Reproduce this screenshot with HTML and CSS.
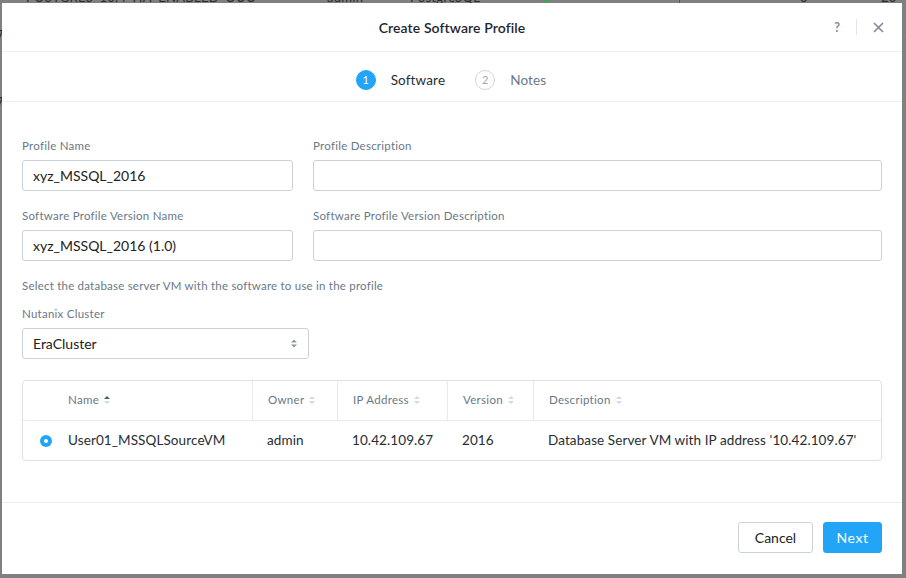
FILE: index.html
```html
<!DOCTYPE html>
<html lang="en">
<head>
<meta charset="utf-8">
<title>Create Software Profile</title>
<link rel="stylesheet" href="styles.css">
</head>
<body>
<div class="backdrop">
  <div class="bg-row bg-first">
    <span class="bg-name">POSTGRES_10.4_HA_ENABLED_OUO</span>
    <span class="bg-owner">admin</span>
    <span class="bg-type">PostgreSQL</span>
    <span class="bg-status"><span class="dot"></span></span>
    <span class="bg-line"></span>
    <span class="bg-count">0</span>
    <span class="bg-date">20</span>
  </div>
  <div class="bg-row bg-edge">
    <span class="bg-left">7</span>
    <span class="bg-right">2</span>
  </div>
  <div class="bg-row bg-edge bg-edge2">
    <span class="bg-left">7</span>
    <span class="bg-right">2</span>
  </div>
</div>

<div class="modal">
  <header class="modal-header">
    <span></span>
    <h1 class="modal-title">Create Software Profile</h1>
    <div class="header-actions">
      <span class="help">?</span>
      <span class="sep"></span>
      <svg class="close" width="11" height="11" viewBox="0 0 11 11"><path d="M1 1 L10 10 M10 1 L1 10" stroke="#7d8a99" stroke-width="1.6" fill="none"/></svg>
    </div>
  </header>

  <nav class="stepper">
    <div class="step active"><span class="step-num">1</span><span class="step-label">Software</span></div>
    <div class="step"><span class="step-num">2</span><span class="step-label">Notes</span></div>
  </nav>

  <main class="modal-body">
    <div class="form-grid">
      <div class="field">
        <label class="label">Profile Name</label>
        <div class="input">xyz_MSSQL_2016</div>
      </div>
      <div class="field">
        <label class="label">Profile Description</label>
        <div class="input"></div>
      </div>
      <div class="field">
        <label class="label">Software Profile Version Name</label>
        <div class="input">xyz_MSSQL_2016 (1.0)</div>
      </div>
      <div class="field">
        <label class="label">Software Profile Version Description</label>
        <div class="input"></div>
      </div>
    </div>

    <p class="hint">Select the database server VM with the software to use in the profile</p>

    <div class="field">
      <label class="label">Nutanix Cluster</label>
      <div class="select">
        <span>EraCluster</span>
        <svg width="6" height="9" viewBox="0 0 6 9"><path d="M0 3.5 L3 0.5 L6 3.5 Z M0 5.5 L3 8.5 L6 5.5 Z" fill="#8c96a1"/></svg>
      </div>
    </div>

    <div class="table">
      <div class="thead">
        <div class="cell c-radio"></div>
        <div class="cell c-name">Name <svg class="sort" width="6" height="10" viewBox="0 0 6 10"><path d="M0 4 L3 1 L6 4 Z" fill="#4f5b69"/><path d="M0 6 L3 9 L6 6 Z" fill="#d3d8de"/></svg></div>
        <div class="cell c-owner">Owner <svg class="sort" width="6" height="10" viewBox="0 0 6 10"><path d="M0 4 L3 1 L6 4 Z M0 6 L3 9 L6 6 Z" fill="#d3d8de"/></svg></div>
        <div class="cell c-ip">IP Address <svg class="sort" width="6" height="10" viewBox="0 0 6 10"><path d="M0 4 L3 1 L6 4 Z M0 6 L3 9 L6 6 Z" fill="#d3d8de"/></svg></div>
        <div class="cell c-ver">Version <svg class="sort" width="6" height="10" viewBox="0 0 6 10"><path d="M0 4 L3 1 L6 4 Z M0 6 L3 9 L6 6 Z" fill="#d3d8de"/></svg></div>
        <div class="cell c-desc">Description <svg class="sort" width="6" height="10" viewBox="0 0 6 10"><path d="M0 4 L3 1 L6 4 Z M0 6 L3 9 L6 6 Z" fill="#d3d8de"/></svg></div>
      </div>
      <div class="trow">
        <div class="cell c-radio"><span class="radio"></span></div>
        <div class="cell c-name">User01_MSSQLSourceVM</div>
        <div class="cell c-owner">admin</div>
        <div class="cell c-ip">10.42.109.67</div>
        <div class="cell c-ver">2016</div>
        <div class="cell c-desc">Database Server VM with IP address '10.42.109.67'</div>
      </div>
    </div>
  </main>

  <footer class="modal-footer">
    <button class="btn btn-secondary">Cancel</button>
    <button class="btn btn-primary">Next</button>
  </footer>
</div>
</body>
</html>
```

FILE: styles.css
```css
* { box-sizing: border-box; }

html, body {
  margin: 0;
  padding: 0;
}

body {
  background: #808080;
  font-family: Lato, "Open Sans", Arial, sans-serif;
  color: #222;
  width: 906px;
  height: 578px;
  overflow: hidden;
}

.backdrop {
  height: 578px;
  overflow: hidden;
}

.bg-row {
  display: flex;
  align-items: center;
  height: 16px;
  font-size: 13px;
  color: #2a2a2a;
  letter-spacing: 0.3px;
  white-space: nowrap;
}
.bg-first { margin-top: -11px; }
.bg-name { margin-left: 26px; width: 301px; }
.bg-owner { width: 83px; }
.bg-type { width: 133px; }
.bg-status { width: 136px; }
.dot {
  display: inline-block;
  width: 7px;
  height: 7px;
  border-radius: 50%;
  background: #3aa657;
}
.bg-line {
  width: 1px;
  height: 16px;
  background: #555;
  margin-right: 120px;
}
.bg-count { width: 81px; }

.bg-edge {
  margin-top: 22px;
  justify-content: space-between;
  margin-left: -4px;
  margin-right: -7px;
}
.bg-edge2 { margin-top: 51px; }

.modal {
  position: fixed;
  left: 2px;
  top: 3px;
  width: 900px;
  background: #fff;
  display: flex;
  flex-direction: column;
}

.modal-header {
  height: 49px;
  border-bottom: 1px solid #eef0f2;
  display: grid;
  grid-template-columns: 1fr auto 1fr;
  align-items: center;
}

.modal-title {
  margin: 0;
  font-size: 14px;
  font-weight: 600;
  letter-spacing: 0.1px;
  color: #1e2630;
}

.header-actions {
  justify-self: end;
  display: flex;
  align-items: center;
  padding-right: 18px;
}

.help {
  font-size: 12.5px;
  color: #7f8b98;
  font-weight: 700;
  margin-right: 1px;
}

.sep {
  width: 1px;
  height: 16px;
  background: #e1e5e9;
  margin: 0 16px 0 15px;
}

.close { display: block; }

.stepper {
  display: flex;
  justify-content: center;
  align-items: center;
  gap: 30px;
  padding: 18px 0 12px 0;
  border-bottom: 1px solid #eef0f2;
  height: 50px;
}

.step {
  display: flex;
  align-items: center;
  gap: 15px;
}

.step.active { margin-left: -2px; }

.step-num {
  width: 20px;
  height: 20px;
  border-radius: 50%;
  border: 1px solid #cfd5dc;
  color: #a0a9b3;
  font-size: 11px;
  display: flex;
  align-items: center;
  justify-content: center;
}

.step.active .step-num {
  background: #22a5f7;
  border-color: #22a5f7;
  color: #fff;
}

.step-label {
  font-size: 13.5px;
  color: #6a7888;
  letter-spacing: 0.15px;
}

.step.active .step-label { color: #262d35; }

.modal-body {
  padding: 37px 20px 41px;
}

.form-grid {
  display: grid;
  grid-template-columns: 271px 1fr;
  column-gap: 20px;
  row-gap: 18px;
}

.field {
  display: flex;
  flex-direction: column;
}

.label {
  font-size: 11.5px;
  line-height: 14px;
  letter-spacing: 0.25px;
  color: #6a7888;
  margin-bottom: 7px;
}

.input, .select {
  height: 31px;
  border: 1px solid #cbd1d8;
  border-radius: 3px;
  padding: 0 10px;
  font-size: 14px;
  color: #222;
  display: flex;
  align-items: center;
}

.hint {
  margin: 18px 0 14px;
  font-size: 11.5px;
  line-height: 14px;
  letter-spacing: 0.22px;
  color: #6a7888;
}

.select {
  width: 287px;
  justify-content: space-between;
  padding-right: 11px;
}

.table {
  margin-top: 21px;
  border: 1px solid #dde1e6;
  border-radius: 4px;
}

.thead, .trow {
  display: grid;
  grid-template-columns: 29px 200px 85px 110px 86px 1fr;
}

.thead {
  height: 40px;
  border-bottom: 1px solid #e8ebee;
}

.thead .cell {
  font-size: 11.5px;
  letter-spacing: 0.3px;
  color: #6a7888;
  border-left: 1px solid #e8ebee;
  padding-bottom: 3px;
}

.thead .cell.c-radio, .thead .cell.c-name { border-left: none; }

.cell {
  display: flex;
  align-items: center;
  padding-left: 15px;
  white-space: nowrap;
}

.cell.c-radio { padding-left: 0; justify-content: flex-end; }
.thead .cell.c-name, .trow .cell.c-name { padding-left: 16px; }

.sort { margin-left: 5px; margin-top: 2px; }

.trow {
  height: 39px;
  font-size: 13.5px;
  letter-spacing: 0.1px;
  color: #262d35;
  padding-bottom: 1px;
}

.radio {
  width: 12px;
  height: 12px;
  border-radius: 50%;
  background: #22a5f7;
  display: flex;
  align-items: center;
  justify-content: center;
  margin-top: 2px;
}
.radio::after {
  content: "";
  width: 4px;
  height: 4px;
  border-radius: 50%;
  background: #fff;
}

.modal-footer {
  border-top: 1px solid #eceef0;
  height: 72px;
  padding: 19px 20px 21px;
  display: flex;
  justify-content: flex-end;
  gap: 10px;
}

.btn {
  height: 31px;
  border-radius: 3px;
  font-family: inherit;
  font-size: 14px;
  padding: 0;
  cursor: pointer;
}

.btn-secondary {
  width: 75px;
  background: #fff;
  border: 1px solid #ccd2d9;
  color: #222;
}

.btn-primary {
  width: 59px;
  background: #22a5f7;
  border: 1px solid #22a5f7;
  color: #fff;
  letter-spacing: 0.6px;
}
```
